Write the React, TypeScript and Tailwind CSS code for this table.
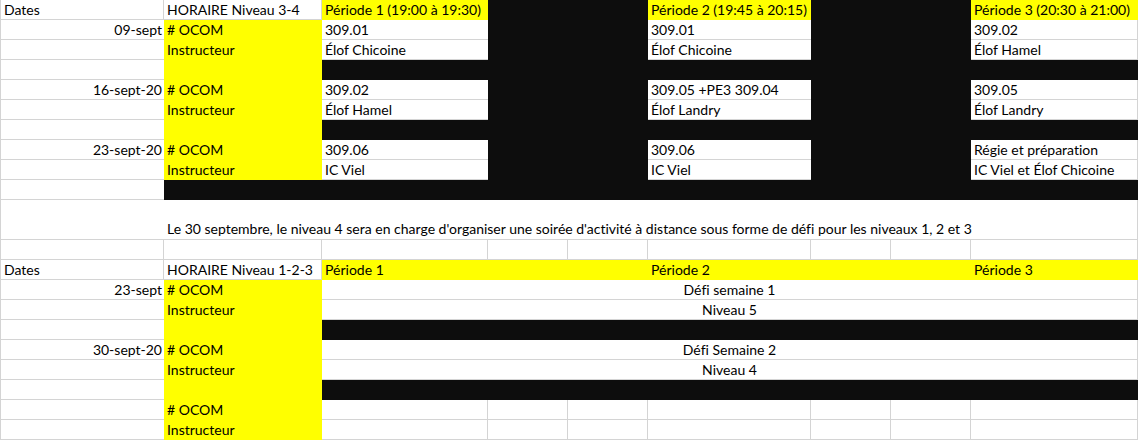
import React from 'react';

type Fill = 'w' | 'y' | 'k';

const SPAN: Record<number, string> = {
  1: 'col-span-1',
  2: 'col-span-2',
  7: 'col-span-7',
  8: 'col-span-8',
};

function Cell({
  children,
  fill = 'w',
  span = 1,
  right = false,
  center = false,
  noR = false,
  first = false,
}: {
  children?: React.ReactNode;
  fill?: Fill;
  span?: number;
  right?: boolean;
  center?: boolean;
  noR?: boolean;
  first?: boolean;
}) {
  const bg =
    fill === 'y' ? 'bg-[#ffff00]' : fill === 'k' ? 'bg-[#0d0d0d]' : 'bg-white border-b border-[#d4d4d4]';
  const br = fill === 'w' && !noR ? 'border-r' : '';
  const bl = first ? 'border-l border-[#d4d4d4]' : '';
  const align = right ? 'text-right pr-[2px]' : center ? 'text-center' : 'pl-[3px]';
  return (
    <div className={`${SPAN[span]} h-5 ${bg} ${br} ${bl} ${align} whitespace-nowrap leading-[20px]`}>
      {children}
    </div>
  );
}

// ligne de la section 1 (périodes séparées par des colonnes noires)
function Row3({ date, label, p1, p2, p3 }: { date?: string; label: string; p1: string; p2: string; p3: string }) {
  return (
    <>
      <Cell first right noR>{date}</Cell>
      <Cell fill="y">{label}</Cell>
      <Cell noR>{p1}</Cell>
      <Cell fill="k" span={2} />
      <Cell noR>{p2}</Cell>
      <Cell fill="k" span={2} />
      <Cell>{p3}</Cell>
    </>
  );
}

function BlackRow() {
  return (
    <>
      <Cell first noR />
      <Cell fill="y" />
      <Cell fill="k" span={7} />
    </>
  );
}

function MergedRow({ date, label, text }: { date?: string; label: string; text: string }) {
  return (
    <>
      <Cell first right noR>{date}</Cell>
      <Cell fill="y">{label}</Cell>
      <Cell span={7} center>{text}</Cell>
    </>
  );
}

export default function App() {
  return (
    <div
      className="w-[1138px] h-[440px] overflow-hidden bg-white text-[14px] text-black [font-variant-ligatures:none]"
      style={{ fontFamily: 'Lato, "Open Sans", sans-serif' }}
    >
      <div className="grid grid-cols-[164px_158px_166px_80px_80px_163px_80px_80px_167px] border-[#d4d4d4]">
        {/* Niveau 3-4 */}
        <Cell first>Dates</Cell>
        <Cell>HORAIRE Niveau 3-4</Cell>
        <Cell fill="y">Période 1 (19:00 à 19:30)</Cell>
        <Cell fill="k" span={2} />
        <Cell fill="y">Période 2 (19:45 à 20:15)</Cell>
        <Cell fill="k" span={2} />
        <Cell fill="y">Période 3 (20:30 à 21:00)</Cell>

        <Row3 date="09-sept" label="# OCOM" p1="309.01" p2="309.01" p3="309.02" />
        <Row3 label="Instructeur" p1="Élof Chicoine" p2="Élof Chicoine" p3="Élof Hamel" />
        <BlackRow />
        <Row3 date="16-sept-20" label="# OCOM" p1="309.02" p2="309.05 +PE3 309.04" p3="309.05" />
        <Row3 label="Instructeur" p1="Élof Hamel" p2="Élof Landry" p3="Élof Landry" />
        <BlackRow />
        <Row3 date="23-sept-20" label="# OCOM" p1="309.06" p2="309.06" p3="Régie et préparation" />
        <Row3 label="Instructeur" p1="IC Viel" p2="IC Viel" p3="IC Viel et Élof Chicoine" />
        <Cell first noR />
        <Cell fill="k" span={8} />

        {/* note */}
        <div className="col-span-1 h-10 border-l border-b border-[#d4d4d4] bg-white" />
        <div className="col-span-8 h-10 border-b border-r border-[#d4d4d4] bg-white flex items-end pl-[3px] whitespace-nowrap leading-[20px]">
          Le 30 septembre, le niveau 4 sera en charge d'organiser une soirée d'activité à distance sous forme de défi pour les niveaux 1, 2 et 3
        </div>

        {/* ligne vide */}
        <Cell first />
        <Cell />
        <Cell />
        <Cell />
        <Cell />
        <Cell />
        <Cell />
        <Cell />
        <Cell />

        {/* Niveau 1-2-3 */}
        <Cell first>Dates</Cell>
        <Cell>HORAIRE Niveau 1-2-3</Cell>
        <Cell fill="y">Période 1</Cell>
        <Cell fill="y" span={2} />
        <Cell fill="y">Période 2</Cell>
        <Cell fill="y" span={2} />
        <Cell fill="y">Période 3</Cell>

        <MergedRow date="23-sept" label="# OCOM" text="Défi semaine 1" />
        <MergedRow label="Instructeur" text="Niveau 5" />
        <BlackRow />
        <MergedRow date="30-sept-20" label="# OCOM" text="Défi Semaine 2" />
        <MergedRow label="Instructeur" text="Niveau 4" />
        <BlackRow />

        {['# OCOM', 'Instructeur'].map((l) => (
          <React.Fragment key={l}>
            <Cell first noR />
            <Cell fill="y">{l}</Cell>
            <Cell />
            <Cell />
            <Cell />
            <Cell />
            <Cell />
            <Cell />
            <Cell />
          </React.Fragment>
        ))}
      </div>
    </div>
  );
}
